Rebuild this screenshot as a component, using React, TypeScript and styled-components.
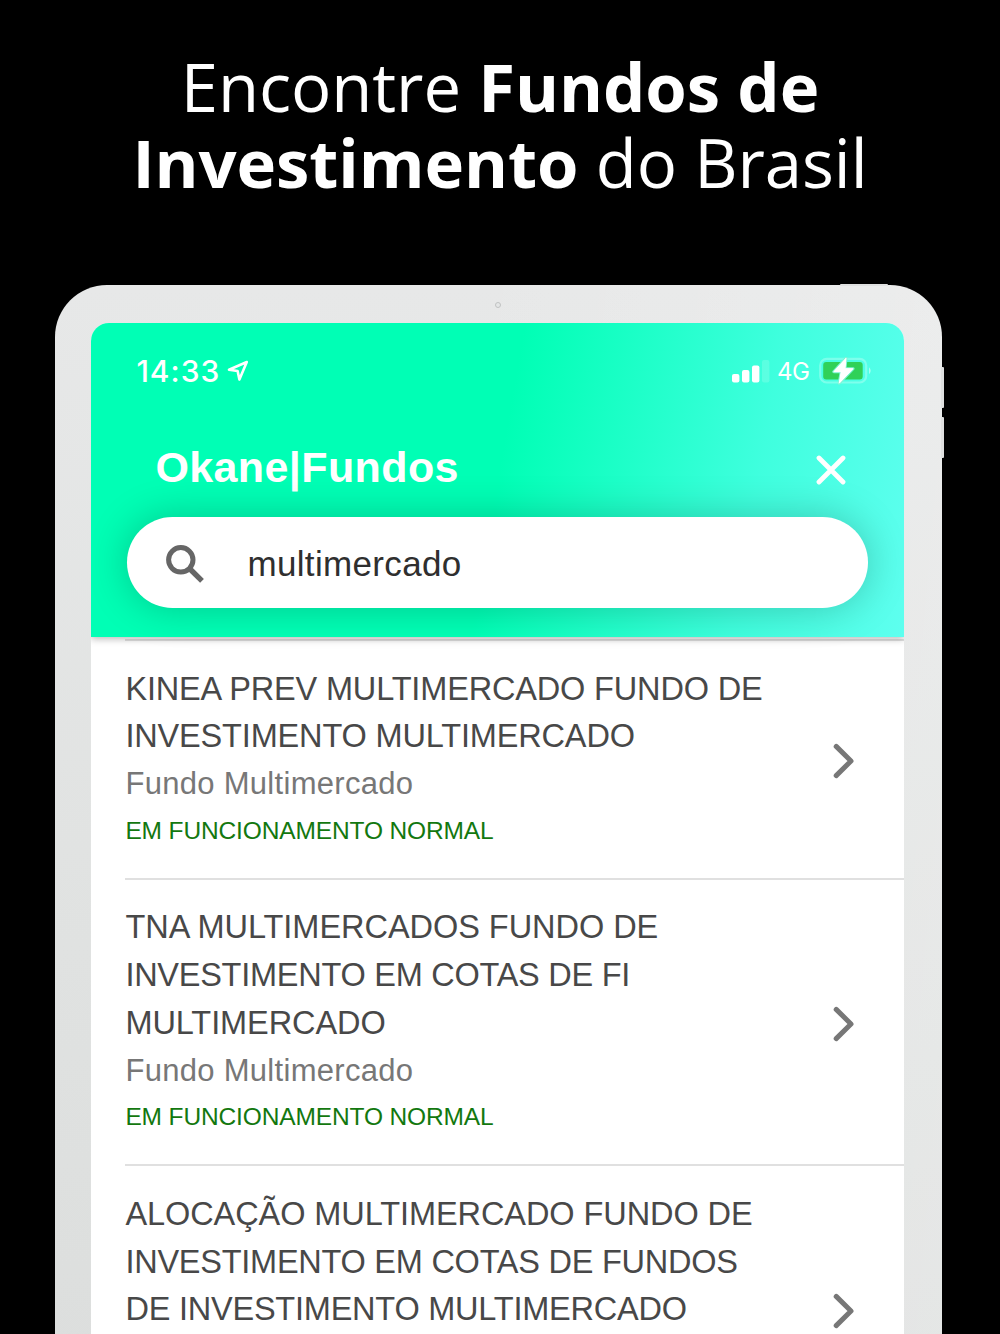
import React from "react";
import styled, { createGlobalStyle } from "styled-components";

const GlobalStyle = createGlobalStyle`
  * { box-sizing: border-box; }
  body { margin: 0; background: #000; }
`;

const Page = styled.main`
  width: 1000px;
  height: 1334px;
  overflow: hidden;
  background: #000;
  display: flex;
  flex-direction: column;
  align-items: center;
  font-family: "Liberation Sans", Arial, sans-serif;
`;

const Headline = styled.h1`
  margin: 0;
  padding-top: 48px;
  height: 285px;
  flex: none;
  font-family: "Open Sans", sans-serif;
  font-weight: 400;
  font-size: 67px;
  letter-spacing: -0.06px;
  line-height: 76px;
  text-align: center;
  color: #fff;
  white-space: nowrap;
`;

const Device = styled.section`
  position: relative;
  flex: none;
  width: 887px;
  height: 1200px;
  margin-right: 3px;
  padding: 38px 38px 0 36.4px;
  border-radius: 52px 52px 0 0;
  background: linear-gradient(95deg, rgba(255, 255, 255, 0) 40%, rgba(255, 255, 255, 0.25) 100%),
    linear-gradient(180deg, #e7e8e8 0%, #e0e2e1 55%, #dbdddc 100%);
`;

const HardwareKey = styled.i<{ $x: number; $y: number; $w: number; $h: number }>`
  position: absolute;
  left: ${(p) => p.$x}px;
  top: ${(p) => p.$y}px;
  width: ${(p) => p.$w}px;
  height: ${(p) => p.$h}px;
  border-radius: 1px;
  background: #dfe0e0;
`;

const Camera = styled.i`
  position: absolute;
  left: 440px;
  top: 17px;
  width: 6px;
  height: 6px;
  border-radius: 50%;
  border: 1px solid #c0c2c2;
  background: #e4e6e6;
`;

const Screen = styled.div`
  height: 100%;
  border-radius: 18px 18px 0 0;
  overflow: hidden;
  background: #fff;
`;

const Header = styled.header`
  position: relative;
  z-index: 1;
  height: 314px;
  padding: 0 36px;
  display: flex;
  flex-direction: column;
  background: linear-gradient(100deg, #00ffb5 0%, #00ffb5 50%, #3fffde 80%, #5effef 100%);
  box-shadow: 0 2px 7px rgba(0, 0, 0, 0.28);
`;

const StatusBar = styled.div`
  height: 96px;
  padding: 0 0 0 9px;
  display: flex;
  align-items: center;
  color: #fff;
  font-family: Inter, sans-serif;
`;

const Clock = styled.span`
  width: 91px;
  font-size: 30px;
  font-weight: 500;
  letter-spacing: 1px;
  white-space: nowrap;
`;

const Network = styled.span`
  margin-left: 7px;
  width: 42px;
  font-size: 24px;
  letter-spacing: -0.4px;
`;

const Battery = styled.svg`
  margin-right: -5px;
`;

const Spacer = styled.span`
  flex: 1;
`;

const TitleBar = styled.div`
  height: 98px;
  padding: 0 22px 0 28px;
  display: flex;
  align-items: center;
  justify-content: space-between;
  color: #fff;
`;

const Title = styled.h2`
  margin: 0;
  padding-bottom: 3px;
  font-size: 43px;
  font-weight: 700;
  line-height: 50px;
  letter-spacing: 0.4px;
`;

const Close = styled.svg`
  margin-top: 3px;
`;

const SearchBox = styled.label`
  height: 91px;
  padding-left: 38px;
  display: flex;
  align-items: center;
  gap: 42px;
  border-radius: 46px;
  background: #fff;
  box-shadow: 0 0 40px rgba(0, 0, 0, 0.22);
`;

const Query = styled.span`
  font-size: 35px;
  color: #2f2f2f;
  line-height: 40px;
  padding-top: 2px;
  letter-spacing: 0.35px;
`;

const List = styled.ul`
  margin: 0;
  padding: 2px 0 0 34px;
  list-style: none;
`;

const Row = styled.li`
  display: flex;
  align-items: center;
  justify-content: space-between;
  padding: 24.5px 49px 22.7px 0;
  border-top: 2px solid #e0e0e0;
`;

const RowText = styled.div`
  display: flex;
  flex-direction: column;
  white-space: nowrap;
`;

const FundName = styled.span<{ $tracking: number }>`
  font-size: 32.5px;
  line-height: 47.8px;
  letter-spacing: ${(p) => p.$tracking}px;
  color: #484848;
`;

const FundKind = styled.span`
  font-size: 31px;
  line-height: 45.4px;
  letter-spacing: 0.3px;
  color: #777;
`;

const FundStatus = styled.span`
  font-size: 24.5px;
  line-height: 48.6px;
  letter-spacing: -0.13px;
  color: #13780f;
`;

type NameLine = { text: string; tracking: number };
type Fund = { name: NameLine[]; kind: string; status: string };

const funds: Fund[] = [
  {
    name: [
      { text: "KINEA PREV MULTIMERCADO FUNDO DE", tracking: -0.16 },
      { text: "INVESTIMENTO MULTIMERCADO", tracking: -0.16 },
    ],
    kind: "Fundo Multimercado",
    status: "EM FUNCIONAMENTO NORMAL",
  },
  {
    name: [
      { text: "TNA MULTIMERCADOS FUNDO DE", tracking: -0.04 },
      { text: "INVESTIMENTO EM COTAS DE FI", tracking: -0.26 },
      { text: "MULTIMERCADO", tracking: -0.08 },
    ],
    kind: "Fundo Multimercado",
    status: "EM FUNCIONAMENTO NORMAL",
  },
  {
    name: [
      { text: "ALOCAÇÃO MULTIMERCADO FUNDO DE", tracking: -0.08 },
      { text: "INVESTIMENTO EM COTAS DE FUNDOS", tracking: -0.25 },
      { text: "DE INVESTIMENTO MULTIMERCADO", tracking: -0.22 },
    ],
    kind: "Fundo Multimercado",
    status: "EM FUNCIONAMENTO NORMAL",
  },
];

const LocationIcon = () => (
  <svg width="22" height="22" viewBox="0 0 22 22" fill="none" stroke="#fff" strokeWidth="2.6" strokeLinejoin="round">
    <path d="M19.8 2 L2 9.8 L10.6 11 L12.4 19.6 Z" />
  </svg>
);

const SignalIcon = () => (
  <svg width="38" height="24" viewBox="0 0 38 24" fill="#fff">
    <rect x="0" y="15" width="7.4" height="8.5" rx="2" />
    <rect x="10" y="11" width="7.4" height="12.5" rx="2" />
    <rect x="20" y="6.5" width="7.4" height="17" rx="2" />
    <rect x="30" y="1" width="7.4" height="22.5" rx="2" opacity="0.16" />
  </svg>
);

const BatteryIcon = () => (
  <Battery width="54" height="28" viewBox="0 0 54 28">
    <rect x="1.2" y="1.9" width="46" height="23.6" rx="6.5" fill="none" stroke="#fff" strokeOpacity="0.28" strokeWidth="2.2" />
    <path d="M50 10.2 q3.4 3.5 0 7 Z" fill="#fff" opacity="0.5" />
    <rect x="4.2" y="4.9" width="39.5" height="17.6" rx="3" fill="#30d158" />
    <path
      d="M27 1.2 L14.8 14.7 H22.2 L20.2 26.2 L34 11.7 H26 Z"
      fill="#fff"
      stroke="#7ff5d4"
      strokeWidth="3"
      strokeLinejoin="round"
      paintOrder="stroke"
    />
    <path d="M27 1.2 L14.8 14.7 H22.2 L20.2 26.2 L34 11.7 H26 Z" fill="#fff" stroke="#fff" strokeWidth="1" strokeLinejoin="round" />
  </Battery>
);

const CloseIcon = () => (
  <Close width="30" height="30" viewBox="0 0 30 30" stroke="#fff" strokeWidth="4.8" strokeLinecap="round">
    <path d="M3 3 L27 27 M27 3 L3 27" />
  </Close>
);

const SearchIcon = () => (
  <svg width="40" height="40" viewBox="0 0 40 40" fill="none" stroke="#666" strokeWidth="5">
    <circle cx="15.8" cy="16.8" r="12.2" />
    <path d="M24.5 25.5 L37 37.8" strokeWidth="5.4" />
  </svg>
);

const Chevron = styled.svg`
  margin-top: 2px;
`;

const ChevronIcon = () => (
  <Chevron width="22" height="36" viewBox="0 0 22 36" fill="none" stroke="#777" strokeWidth="5" strokeLinecap="round" strokeLinejoin="round">
    <path d="M3.2 3.4 L18 18 L3.2 32.6" />
  </Chevron>
);

export default function App() {
  return (
    <Page>
      <GlobalStyle />
      <Headline>
        Encontre <b>Fundos de</b>
        <br />
        <b>Investimento</b> do Brasil
      </Headline>
      <Device>
        <HardwareKey $x={785} $y={-1} $w={48} $h={2} />
        <HardwareKey $x={886} $y={82} $w={2.5} $h={41} />
        <HardwareKey $x={886} $y={132} $w={2.5} $h={41} />
        <Camera />
        <Screen>
          <Header>
            <StatusBar>
              <Clock>14:33</Clock>
              <LocationIcon />
              <Spacer />
              <SignalIcon />
              <Network>4G</Network>
              <BatteryIcon />
            </StatusBar>
            <TitleBar>
              <Title>Okane|Fundos</Title>
              <CloseIcon />
            </TitleBar>
            <SearchBox>
              <SearchIcon />
              <Query>multimercado</Query>
            </SearchBox>
          </Header>
          <List>
            {funds.map((fund) => (
              <Row key={fund.name[0].text}>
                <RowText>
                  {fund.name.map((line) => (
                    <FundName key={line.text} $tracking={line.tracking}>
                      {line.text}
                    </FundName>
                  ))}
                  <FundKind>{fund.kind}</FundKind>
                  <FundStatus>{fund.status}</FundStatus>
                </RowText>
                <ChevronIcon />
              </Row>
            ))}
          </List>
        </Screen>
      </Device>
    </Page>
  );
}
